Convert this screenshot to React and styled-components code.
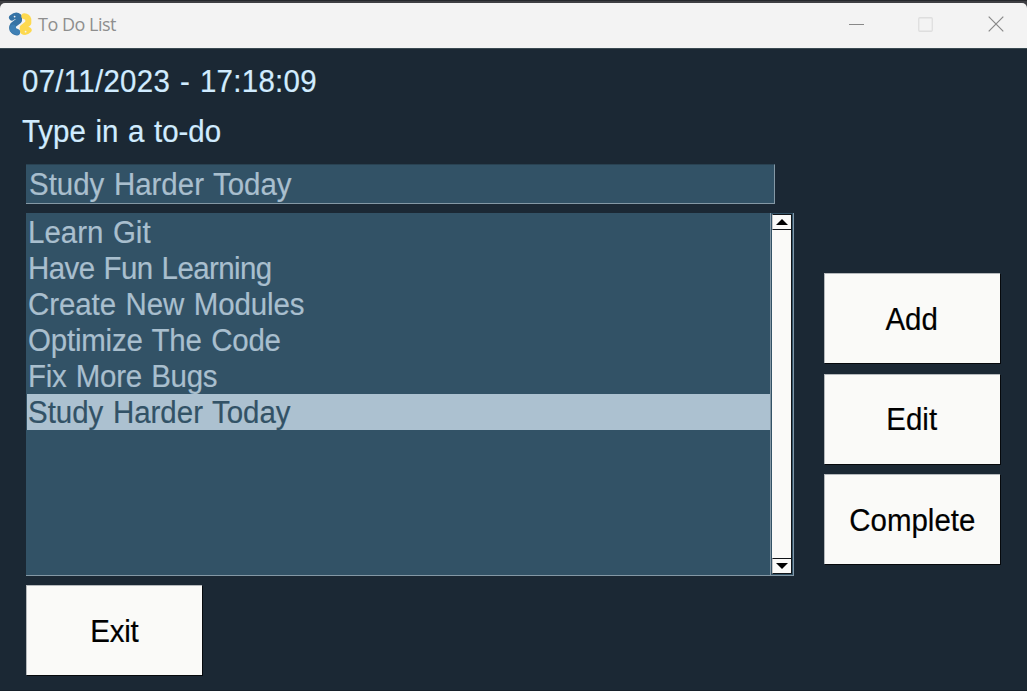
import React from 'react';
import styled, { createGlobalStyle } from 'styled-components';

const GlobalStyle = createGlobalStyle`
  * { box-sizing: border-box; }
  body { margin: 0; background: #1b2834; overflow: hidden; }
`;

const Window = styled.div`
  width: 1027px;
  height: 691px;
  display: flex;
  flex-direction: column;
  background: #1b2834;
  border-bottom: 1px solid #16202a;
  font-family: 'Liberation Sans', Arial, sans-serif;
  font-size: 31px;
  line-height: 36px;
  white-space: pre;
`;

const TopEdge = styled.div`
  height: 48px;
  padding-top: 3px;
  background: linear-gradient(#26282c 0 1px, #3e3f43 1px 3px);
`;

const TitleBar = styled.header`
  height: 45px;
  display: flex;
  align-items: center;
  padding: 0 23px 3px 8px;
  background: #f3f3f3;
  border-radius: 5px 5px 0 0;
`;

const Title = styled.h1`
  flex: 1;
  margin: 0 0 0 6px;
  font: 400 18px/24px 'Open Sans', 'Noto Sans', sans-serif;
  letter-spacing: -0.5px;
  color: #8e8e8e;
`;

const Controls = styled.div`
  display: flex;
  align-items: center;
  svg { display: block; }
  svg + svg { margin-left: 54px; }
  svg:last-child { margin-left: 55px; }
`;

const Content = styled.main`
  flex: 1;
  display: flex;
  padding: 15px 26px 0 22px;
  border-top: 1px solid #3a4a52;
`;

const Main = styled.section`
  width: 802px;
  margin-top: -1px;
  display: flex;
  flex-direction: column;
  align-items: flex-start;
`;

/* Slightly condensed lettering shared by every caption in the window. */
const Caption = styled.span`
  display: inline-block;
  transform: scaleX(0.95);
  transform-origin: ${(p) => (p.$centered ? 'center' : 'left')};
  -webkit-text-stroke: 0.2px;
  letter-spacing: ${(p) => p.$tracking || 0}px;
  word-spacing: 1.5px;
`;

const Label = styled.label`
  height: 36px;
  margin-bottom: 14px;
  line-height: 37px;
  color: #d1ecff;
`;

const Input = styled.div`
  width: 749px;
  height: 40px;
  margin: 1px 0 9px 4px;
  padding: 2px 0 0 3px;
  background: #325266;
  border: solid #8498a5;
  border-width: 0 1px 1px 0;
  border-top: 1px solid #294252;
  color: #a9bfce;
`;

const ListBox = styled.div`
  width: 768px;
  height: 363px;
  margin: 0 0 9px 4px;
  display: flex;
  background: #325266;
  border-bottom: 1px solid #8498a5;
`;

const Items = styled.ul`
  flex: 1;
  margin: 0;
  padding: 1px 0 0 1px;
  list-style: none;
  border-right: 1px solid #8498a5;
`;

const Item = styled.li`
  height: 36px;
  padding-left: 0.6px;
  line-height: 37px;
  color: ${(p) => (p.$selected ? '#325266' : '#a9bfce')};
  background: ${(p) => (p.$selected ? '#acc1d0' : 'transparent')};
`;

const ScrollBar = styled.div`
  width: 23px;
  display: flex;
  flex-direction: column;
  padding: 1px;
  border-right: 1px solid #8098aa;
  background: #325266;
`;

const ScrollArrow = styled.div`
  height: 16px;
  display: flex;
  align-items: center;
  justify-content: center;
  background: #fafaf8;
  border: 1px solid #101418;
  border-left-color: #c8c8c8;
`;

const Thumb = styled.div`
  flex: 1;
  background: #fafaf8;
  border-right: 1px solid #101418;
`;

const Button = styled.button`
  width: 176px;
  height: 90px;
  margin: 0 0 0 ${(p) => p.$indent || 0}px;
  padding: 2px 1px 0 0;
  background: #fafaf8;
  border: 1px solid #b5b9bc;
  border-width: 1px 0 0 1px;
  box-shadow: 1px 1px 0 #06090c;
  color: #000;
  font: inherit;
`;

const Actions = styled.aside`
  display: flex;
  flex-direction: column;
  gap: 10.5px;
  padding-top: 209px;
`;

const AppIcon = () => (
  <svg width="24" height="24" viewBox="0 0 24 24">
    <g strokeLinecap="round" strokeLinejoin="round" fill="none" strokeWidth="6">
      <path d="M4 5.5Q8 2.2 11 4.7v3.8l-6 4.6q-1.5 2.3-.5 4.6 1.7 2.6 4.5 2.8" stroke="#3673a5" />
      <path d="M16.3 4.2q3.1.2 4 3.1v3.9l-5.6 4.4v3.5q2.8 2.1 5.9-.9" stroke="#fdd94f" />
      <path d="M5 15.5v2.4l4 2" stroke="#3f80b5" />
    </g>
    <circle cx="6.6" cy="4.6" r="0.9" fill="#f3f3f3" />
    <circle cx="17.6" cy="19.7" r="0.9" fill="#f3f3f3" />
  </svg>
);

const TODOS = [
  ['Learn Git', 0],
  ['Have Fun Learning', -0.6],
  ['Create New Modules', -0.08],
  ['Optimize The Code', -0.2],
  ['Fix More Bugs', -0.28],
  ['Study Harder Today', 0],
];

export default function App() {
  return (
    <>
      <GlobalStyle />
      <Window>
        <TopEdge>
          <TitleBar>
            <AppIcon />
            <Title>To Do List</Title>
            <Controls>
              <svg width="15" height="16"><path d="M0 8.5h15" stroke="#888" /></svg>
              <svg width="15" height="15">
                <rect x=".75" y=".75" width="13.5" height="13.5" rx="1" fill="none" stroke="#dedede" strokeWidth="1.3" />
              </svg>
              <svg width="16" height="16"><path d="M.7.7l14.6 14.6M15.3.7.7 15.3" stroke="#888" strokeWidth="1.2" /></svg>
            </Controls>
          </TitleBar>
        </TopEdge>
        <Content>
          <Main>
            <Label><Caption $tracking={0.3}>07/11/2023 - 17:18:09</Caption></Label>
            <Label><Caption>Type in a to-do</Caption></Label>
            <Input><Caption>Study Harder Today</Caption></Input>
            <ListBox>
              <Items>
                {TODOS.map(([text, tracking], i) => (
                  <Item key={text} $selected={i === 5}>
                    <Caption $tracking={tracking}>{text}</Caption>
                  </Item>
                ))}
              </Items>
              <ScrollBar>
                <ScrollArrow><svg width="12" height="6"><path d="M0 6 6 0l6 6z" /></svg></ScrollArrow>
                <Thumb />
                <ScrollArrow><svg width="12" height="6"><path d="M0 0h12L6 6z" /></svg></ScrollArrow>
              </ScrollBar>
            </ListBox>
            <Button $indent={4}><Caption $centered $tracking={-0.2}>Exit</Caption></Button>
          </Main>
          <Actions>
            <Button><Caption $centered>Add</Caption></Button>
            <Button><Caption $centered>Edit</Caption></Button>
            <Button><Caption $centered>Complete</Caption></Button>
          </Actions>
        </Content>
      </Window>
    </>
  );
}
